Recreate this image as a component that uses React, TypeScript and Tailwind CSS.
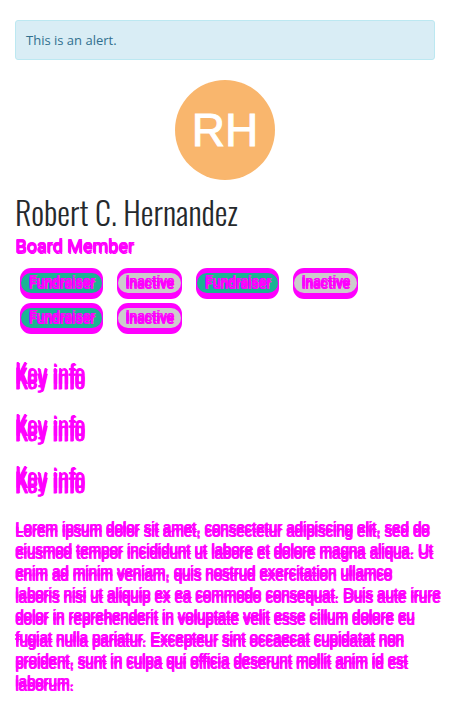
const condensed = "font-['Oswald','Liberation_Sans_Narrow',sans-serif]";

const statuses = [
  { label: 'Fundraiser', active: true },
  { label: 'Inactive', active: false },
  { label: 'Fundraiser', active: true },
  { label: 'Inactive', active: false },
  { label: 'Fundraiser', active: true },
  { label: 'Inactive', active: false },
];

function Status({ label, active }: { label: string; active: boolean }) {
  return (
    <li
      className={`flex h-[31px] rounded-[11px] bg-[#ff00ff] px-px pt-[5px] pb-[6px] font-[Roboto,sans-serif] ${
        active ? 'w-[83px]' : 'w-[65px]'
      }`}
    >
      <span
        className={`flex flex-1 items-center justify-center rounded-full text-[14px] leading-5 text-[#ff00ff] [text-shadow:0_-2px_#ff00ff,1px_-2px_#ff00ff,0_1px_#ff00ff,1px_1px_#ff00ff] ${
          active ? 'bg-[#1bb394]' : 'bg-[#cccccc]'
        }`}
      >
        {label}
      </span>
    </li>
  );
}

function KeyInfo() {
  return (
    <h2 className="h-[52px] text-[26px] leading-8 font-light text-[#ff00ff] [-webkit-text-stroke:1px_#ff00ff] [text-shadow:0_-5px_#ff00ff,1px_-5px_#ff00ff,1px_0_#ff00ff,0_-6px_#ff00ff]">
      Key info
    </h2>
  );
}

export default function App() {
  return (
    <main className={`min-h-screen bg-white px-[15px] py-5 text-[#25292c] ${condensed}`}>
      <div
        role="alert"
        className="h-10 rounded-[3px] border border-[#bce8f1] bg-[#d9edf5] px-2.5 font-['Open_Sans',sans-serif] text-[13px] leading-[38px] text-[#31708f]"
      >
        This is an alert.
      </div>
      <div className="mx-auto mt-5 flex size-[100px] items-center justify-center rounded-full bg-[#f9b66d] font-['Liberation_Sans',Arial,sans-serif] text-[46px] leading-none text-white [-webkit-text-stroke:1px_white]">
        RH
      </div>
      <h1 className="mt-3 text-[32px] leading-10 font-light">Robert C. Hernandez</h1>
      <p className="mt-1 font-[Roboto,sans-serif] text-[18px] leading-5 text-[#ff00ff] [text-shadow:1px_0_#ff00ff,0_1px_#ff00ff,1px_2px_#ff00ff]">
        Board Member
      </p>
      <ul className="mt-3 flex flex-wrap gap-x-3.5 gap-y-1 pl-[5px]">
        {statuses.map((status, index) => (
          <Status key={index} {...status} />
        ))}
      </ul>
      <section className="mt-7">
        <KeyInfo />
        <KeyInfo />
        <KeyInfo />
      </section>
      <p className="-mr-2 mt-[3px] font-['Liberation_Sans',Arial,sans-serif] text-[15px] leading-[22px] text-[#ff00ff] [text-shadow:0_-5px_#ff00ff,1px_-5px_#ff00ff,1px_0_#ff00ff,0_-4px_#ff00ff,0_-1px_#ff00ff]">
        Lorem ipsum dolor sit amet, consectetur adipiscing elit, sed do eiusmod tempor incididunt ut
        labore et dolore magna aliqua. Ut enim ad minim veniam, quis nostrud exercitation ullamco
        <br />
        laboris nisi ut aliquip ex ea commodo consequat. Duis aute irure dolor in reprehenderit in
        voluptate velit esse cillum dolore eu fugiat nulla pariatur. Excepteur sint occaecat
        cupidatat non proident, sunt in culpa qui officia deserunt mollit anim id est laborum.
      </p>
    </main>
  );
}
